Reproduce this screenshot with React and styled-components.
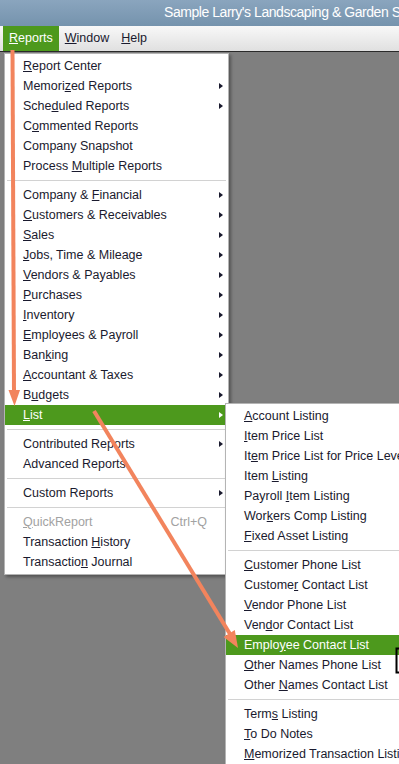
import React from "react";
import styled, { createGlobalStyle } from "styled-components";

const GlobalStyle = createGlobalStyle`
  html, body { margin: 0; padding: 0; overflow: hidden; }
  body { font-family: "Liberation Sans", Arial, sans-serif; }
`;

const Page = styled.div`
  position: relative;
  width: 399px;
  height: 764px;
  overflow: hidden;
  display: flex;
  flex-direction: column;
  background: #7f7f7f;
`;

const TitleBar = styled.div`
  flex: none;
  height: 26px;
  box-sizing: border-box;
  display: flex;
  align-items: center;
  padding: 0 0 2px 164px;
  background: linear-gradient(#8aa5be, #7593ad);
  color: #fff;
  font-size: 14px;
  letter-spacing: -0.45px;
  white-space: nowrap;
`;

const MenuBar = styled.div`
  flex: none;
  height: 26px;
  box-sizing: border-box;
  display: flex;
  align-items: stretch;
  padding-left: 3px;
  background: linear-gradient(#f8f8f8, #e0e0e0);
  border-bottom: 1px solid #2a2a2a;
  font-size: 12.5px;
`;

const MenuTitle = styled.div`
  display: flex;
  align-items: center;
  padding: 0 6px 1px;
  color: ${(p) => (p.$active ? "#fff" : "#1a1a2e")};
  background: ${(p) => (p.$active ? "#4d991d" : "transparent")};
`;

const Workspace = styled.div`
  position: relative;
  flex: 1;
  background: #7f7f7f;
`;

const Menu = styled.div`
  position: absolute;
  left: ${(p) => p.$left}px;
  top: ${(p) => p.$top}px;
  width: ${(p) => p.$width}px;
  box-sizing: border-box;
  padding: 2px 0;
  background: #fff;
  border: 1px solid #b4b4b4;
  box-shadow: 2px 2px 3px rgba(0, 0, 0, 0.35);
  font-size: 12.5px;
  white-space: nowrap;
`;

const Row = styled.div`
  height: 20px;
  display: flex;
  align-items: center;
  padding: 0 5px 0 18px;
  color: ${(p) => (p.$active ? "#fff" : p.$disabled ? "#a2a2a2" : "#1a1a2e")};
  background: ${(p) => (p.$active ? "#4d991d" : "transparent")};
`;

const Label = styled.span`
  flex: 1;
`;

const Shortcut = styled.span`
  margin-right: 16px;
`;

const SubArrow = styled.span`
  width: 0;
  height: 0;
  border-top: 3.5px solid transparent;
  border-bottom: 3.5px solid transparent;
  border-left: 4px solid currentColor;
`;

const Separator = styled.div`
  height: 1px;
  margin: 4px 2px;
  background: #d2d2d2;
`;

const Overlay = styled.svg`
  position: absolute;
  left: 0;
  top: 0;
  pointer-events: none;
`;

const mainItems = [
  { l: "Report Center", u: 0 },
  { l: "Memorized Reports", u: 6, s: true },
  { l: "Scheduled Reports", u: 4, s: true },
  { l: "Commented Reports", u: 1 },
  { l: "Company Snapshot", u: -1 },
  { l: "Process Multiple Reports", u: 8 },
  "sep",
  { l: "Company & Financial", u: 10, s: true },
  { l: "Customers & Receivables", u: 0, s: true },
  { l: "Sales", u: 0, s: true },
  { l: "Jobs, Time & Mileage", u: 0, s: true },
  { l: "Vendors & Payables", u: 0, s: true },
  { l: "Purchases", u: 0, s: true },
  { l: "Inventory", u: 0, s: true },
  { l: "Employees & Payroll", u: 0, s: true },
  { l: "Banking", u: 3, s: true },
  { l: "Accountant & Taxes", u: 0, s: true },
  { l: "Budgets", u: 1, s: true },
  { l: "List", u: 0, s: true, a: true },
  "sep",
  { l: "Contributed Reports", u: -1, s: true },
  { l: "Advanced Reports", u: -1 },
  "sep",
  { l: "Custom Reports", u: -1, s: true },
  "sep",
  { l: "QuickReport", u: 0, d: true, k: "Ctrl+Q" },
  { l: "Transaction History", u: 12 },
  { l: "Transaction Journal", u: 10 },
];

const subItems = [
  { l: "Account Listing", u: 0 },
  { l: "Item Price List", u: 0 },
  { l: "Item Price List for Price Level", u: 2 },
  { l: "Item Listing", u: 5 },
  { l: "Payroll Item Listing", u: 8 },
  { l: "Workers Comp Listing", u: 3 },
  { l: "Fixed Asset Listing", u: 0 },
  "sep",
  { l: "Customer Phone List", u: 0 },
  { l: "Customer Contact List", u: 7 },
  { l: "Vendor Phone List", u: 0 },
  { l: "Vendor Contact List", u: 3 },
  { l: "Employee Contact List", u: 5, a: true },
  { l: "Other Names Phone List", u: 0 },
  { l: "Other Names Contact List", u: 6 },
  "sep",
  { l: "Terms Listing", u: 4 },
  { l: "To Do Notes", u: 0 },
  { l: "Memorized Transaction Listing", u: 0 },
];

function Mnemonic({ text, u }) {
  if (u < 0) return text;
  return (
    <>
      {text.slice(0, u)}
      <u>{text[u]}</u>
      {text.slice(u + 1)}
    </>
  );
}

function MenuList({ items }) {
  return items.map((it, i) =>
    it === "sep" ? (
      <Separator key={i} />
    ) : (
      <Row key={i} $active={it.a} $disabled={it.d}>
        <Label>
          <Mnemonic text={it.l} u={it.u} />
        </Label>
        {it.k && <Shortcut>{it.k}</Shortcut>}
        {it.s && <SubArrow />}
      </Row>
    )
  );
}

function Annotations() {
  const c = "#f2845d";
  return (
    <Overlay width="399" height="764" viewBox="0 0 399 764">
      <line x1="12.5" y1="50" x2="14" y2="392" stroke={c} strokeWidth="4" />
      <polygon points="14.5,406 8.5,390 20,390" fill={c} />
      <line x1="94" y1="411" x2="230" y2="634" stroke={c} strokeWidth="4" />
      <polygon points="238,648 223.6,636.9 234.8,630.1" fill={c} />
      <path d="M399.5 648.5 H396.5 V672.5 H399.5" fill="none" stroke="#000" strokeWidth="2" />
    </Overlay>
  );
}

export default function App() {
  return (
    <>
      <GlobalStyle />
      <Page>
        <TitleBar>Sample Larry's Landscaping &amp; Garden Supply - QuickBooks</TitleBar>
        <MenuBar>
          <MenuTitle $active>
            <span><u>R</u>eports</span>
          </MenuTitle>
          <MenuTitle>
            <span><u>W</u>indow</span>
          </MenuTitle>
          <MenuTitle>
            <span><u>H</u>elp</span>
          </MenuTitle>
        </MenuBar>
        <Workspace>
          <Menu $left={4} $top={1} $width={225}>
            <MenuList items={mainItems} />
          </Menu>
          <Menu $left={225} $top={351} $width={210}>
            <MenuList items={subItems} />
          </Menu>
        </Workspace>
        <Annotations />
      </Page>
    </>
  );
}
